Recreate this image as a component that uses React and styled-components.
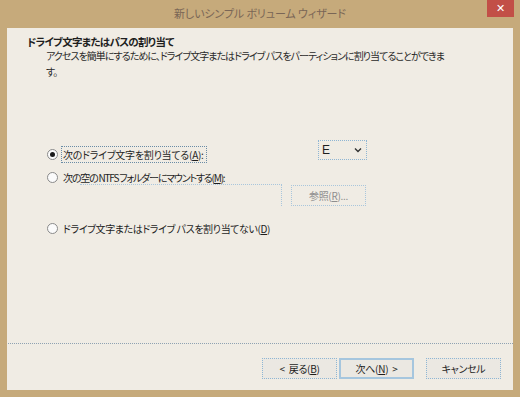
import React, { useState } from 'react';
import styled, { createGlobalStyle } from 'styled-components';

const GlobalStyle = createGlobalStyle`
	html, body {
		margin: 0;
		padding: 0;
		background: #c6aa7b;
	}
	body {
		font-family: 'Noto Sans CJK JP', 'Noto Sans', sans-serif;
		font-size: 10px;
		letter-spacing: -0.6px;
		font-feature-settings: 'palt';
		color: #1e1e1e;
	}
`;
const Frame = styled.div`
	width: 520px;
	height: 397px;
	display: flex;
	flex-direction: column;
	background: #c6aa7b;
`;
const TitleBar = styled.div`
	height: 28px;
	display: grid;
	grid-template-columns: 1fr auto 1fr;
`;
const Title = styled.div`
	grid-column: 2;
	align-self: center;
	padding-bottom: 2px;
	color: #7a6656;
	font-size: 11px;
	letter-spacing: -0.1px;
`;
const Close = styled.button`
	grid-column: 3;
	justify-self: end;
	align-self: start;
	margin-right: 6px;
	width: 27px;
	height: 17px;
	border: none;
	padding: 0;
	background: #c24f47;
	color: #fff;
	font-family: 'DejaVu Sans', sans-serif;
	font-size: 11px;
	font-weight: bold;
	line-height: 17px;
`;
const Body = styled.div`
	flex: 1;
	margin: 0 7px 7px 7px;
	background: #f0ece4;
	display: flex;
	flex-direction: column;
`;
const Header = styled.div`
	padding: 7px 20px 0 20px;
	height: 80px;
	box-sizing: border-box;
`;
const Heading = styled.div`
	font-weight: bold;
	font-size: 10.5px;
	letter-spacing: -0.7px;
	line-height: 13px;
`;
const Sub = styled.div`
	margin-left: 19px;
	line-height: 16px;
	letter-spacing: -0.95px;
	color: #2a2a2a;
`;
const Options = styled.div`
	flex: 1;
	padding: 34px 0 0 40px;
	display: flex;
	flex-direction: column;
`;
const Row = styled.div`
	display: flex;
	align-items: center;
	height: ${(p) => p.h}px;
	margin-top: ${(p) => p.top || 0}px;
`;
const Radio = styled.span`
	width: 11px;
	height: 11px;
	border-radius: 50%;
	border: 1px solid #8a8a8a;
	background: #fbfbfb;
	box-sizing: border-box;
	display: flex;
	align-items: center;
	justify-content: center;
	margin-right: 3px;
	flex-shrink: 0;
	&::after {
		content: '';
		width: 5px;
		height: 5px;
		border-radius: 50%;
		background: ${(p) => (p.checked ? '#1a1a1a' : 'transparent')};
	}
`;
const Option = styled.div`
	display: flex;
	align-items: center;
	cursor: default;
`;
const LabelText = styled.span`
	padding: 0 2px 0 1px;
	line-height: 15px;
	letter-spacing: ${(p) => p.spacing || -0.4}px;
	border: 1px dotted ${(p) => (p.focus ? '#6a8ca6' : 'transparent')};
	u {
		text-decoration: underline;
	}
`;
const Spacer = styled.div`
	flex: 1;
`;
const Combo = styled.div`
	width: 49px;
	height: 20px;
	align-self: flex-start;
	margin: -2px 146px 0 0;
	box-sizing: border-box;
	border: 1px dotted #8fb6d4;
	display: flex;
	align-items: center;
	justify-content: space-between;
	padding: 0 4px 0 3px;
	font-family: 'Liberation Sans', sans-serif;
	font-size: 12px;
	letter-spacing: 0;
`;
const Indent = styled.div`
	display: flex;
	gap: 9px;
	margin-left: 33px;
	margin-top: -5px;
`;
const PathBox = styled.div`
	width: 202px;
	height: 22px;
	box-sizing: border-box;
	border-top: 1px dotted #a9c6dc;
	border-right: 1px dotted #a9c6dc;
`;
const Browse = styled.div`
	width: 75px;
	height: 21px;
	margin-top: 1px;
	box-sizing: border-box;
	border: 1px dotted #a9c6dc;
	display: flex;
	align-items: center;
	justify-content: center;
	color: #8e8e8e;
	letter-spacing: -0.3px;
`;
const Divider = styled.div`
	margin: 0 0 0 1px;
	border-top: 1px dotted #8fa2b2;
`;
const Footer = styled.div`
	height: 46px;
	display: flex;
	align-items: flex-start;
	padding: 14px 12px 0 0;
	box-sizing: border-box;
	justify-content: flex-end;
`;
const Button = styled.button`
	width: 75px;
	height: 21px;
	padding: 0;
	margin-left: ${(p) => p.gap || 0}px;
	box-sizing: border-box;
	font-family: inherit;
	font-size: 10px;
	letter-spacing: -0.3px;
	word-spacing: 2px;
	font-feature-settings: 'palt';
	color: #1e1e1e;
	background: #ebe8e2;
	border: ${(p) => (p.primary ? '2px solid #a6c6de' : '1px dotted #8fb6d4')};
`;

function App() {
	const [choice, setChoice] = useState('letter');
	return (
		<Frame>
			<GlobalStyle />
			<TitleBar>
				<Title>新しいシンプル ボリューム ウィザード</Title>
				<Close>✕</Close>
			</TitleBar>
			<Body>
				<Header>
					<Heading>ドライブ文字またはパスの割り当て</Heading>
					<Sub>
						アクセスを簡単にするために、ドライブ文字またはドライブ パスをパーティションに割り当てることができま
						<br />
						す。
					</Sub>
				</Header>
				<Options>
					<Row h={24}>
						<Option onClick={() => setChoice('letter')}>
							<Radio checked={choice === 'letter'} />
							<LabelText focus spacing={-0.25}>
								次のドライブ文字を割り当てる(<u>A</u>):
							</LabelText>
						</Option>
						<Spacer />
						<Combo>
							<span>E</span>
							<svg width="8" height="6" viewBox="0 0 8 6">
								<path d="M1 1.5 L4 4.5 L7 1.5" fill="none" stroke="#333" strokeWidth="1.4" />
							</svg>
						</Combo>
					</Row>
					<Row h={23}>
						<Option onClick={() => setChoice('folder')}>
							<Radio checked={choice === 'folder'} />
							<LabelText spacing={-1.2}>
								次の空の NTFS フォルダーにマウントする(<u>M</u>):
							</LabelText>
						</Option>
					</Row>
					<Indent>
						<PathBox />
						<Browse>
							参照(<u>R</u>)...
						</Browse>
					</Indent>
					<Row h={24} top={10}>
						<Option onClick={() => setChoice('none')}>
							<Radio checked={choice === 'none'} />
							<LabelText spacing={-0.4}>
								ドライブ文字またはドライブ パスを割り当てない(<u>D</u>)
							</LabelText>
						</Option>
					</Row>
				</Options>
				<Divider />
				<Footer>
					<Button>
						&lt; 戻る(<u>B</u>)
					</Button>
					<Button primary gap={2}>
						次へ(<u>N</u>) &gt;
					</Button>
					<Button gap={12}>キャンセル</Button>
				</Footer>
			</Body>
		</Frame>
	);
}

export default App;
